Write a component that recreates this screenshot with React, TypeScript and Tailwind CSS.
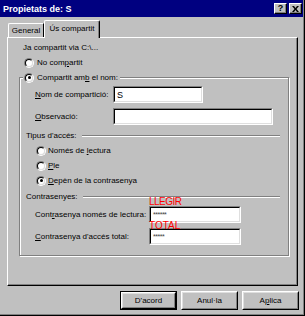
import React from 'react';

const Radio: React.FC<{ checked?: boolean }> = ({ checked }) => (
  <span className="w-[10px] h-[10px] shrink-0 rounded-full border border-t-[#808080] border-l-[#808080] border-b-white border-r-white flex">
    <span className="flex-1 rounded-full border border-t-black border-l-black border-b-[#dfdfdf] border-r-[#dfdfdf] bg-white flex items-center justify-center">
      {checked && <span className="w-[3px] h-[3px] rounded-full bg-black" />}
    </span>
  </span>
);

const Field: React.FC<{ className: string; children?: React.ReactNode }> = ({ className, children }) => (
  <div className={`h-[17px] shrink-0 border border-t-[#808080] border-l-[#808080] border-b-white border-r-white flex ${className}`}>
    <div className="flex-1 border border-t-black border-l-black border-b-[#dfdfdf] border-r-[#dfdfdf] bg-white flex items-center px-[2px]">
      {children}
    </div>
  </div>
);

const Btn: React.FC<{ children: React.ReactNode; primary?: boolean }> = ({ children, primary }) => (
  <div className={`w-[57px] h-[19px] flex ${primary ? 'border border-black' : ''}`}>
    <div className="flex-1 border border-t-white border-l-white border-b-black border-r-black flex">
      <div className="flex-1 border border-t-[#dfdfdf] border-l-[#dfdfdf] border-b-[#808080] border-r-[#808080] flex items-center justify-center text-[8px]">
        {children}
      </div>
    </div>
  </div>
);

const Etched = () => <div className="flex-1 h-[2px] border-t border-t-[#808080] border-b border-b-white" />;

const CapBtn: React.FC<{ children: React.ReactNode }> = ({ children }) => (
  <div className="w-[13px] h-[11px] bg-[#c0c0c0] border border-t-white border-l-white border-b-black border-r-black flex items-center justify-center shadow-[inset_-1px_-1px_0_#808080]">
    {children}
  </div>
);

export default function App() {
  return (
    <div className="w-[305px] h-[316px] bg-[#c0c0c0] flex flex-col text-black text-[8px] leading-[10px] font-['Liberation_Sans',Arial,sans-serif] shadow-[inset_-1px_-1px_0_#000,inset_-2px_-2px_0_#808080]">
      {/* Title bar */}
      <div className="h-[17px] w-[303px] bg-[#000080] flex items-center justify-between pl-[3px] pr-[1px]">
        <span className="text-white font-bold text-[9px]">Propietats de: S</span>
        <div className="flex gap-[2px]">
          <CapBtn><span className="font-bold text-[9px] leading-[9px]">?</span></CapBtn>
          <CapBtn>
            <svg width="7" height="6" viewBox="0 0 7 6">
              <path d="M0 0h2l1.5 2 1.5-2h2L4.5 3 7 6H5L3.5 4 2 6H0l2.5-3z" fill="#000" />
            </svg>
          </CapBtn>
        </div>
      </div>

      {/* Tabs */}
      <div className="h-[20px] flex items-end pl-[8px]">
        <div className="w-[36px] h-[14px] border-t border-l border-t-white border-l-white border-r border-r-black rounded-tl-[2px] flex items-center justify-center text-[8px]">
          General
        </div>
        <div className="relative z-10 -mb-px w-[56px] h-[18px] bg-[#c0c0c0] border-t border-l border-t-white border-l-white border-r border-r-black rounded-t-[2px] shadow-[inset_-1px_0_0_#808080] flex items-center justify-center pb-[2px]">
          Ús compartit
        </div>
      </div>

      {/* Panel */}
      <div className="ml-[7px] w-[291px] h-[249px] shrink-0 border border-t-white border-l-white border-b-black border-r-black shadow-[inset_-1px_-1px_0_#808080] flex flex-col">
        <div className="pt-[3px] pl-[15px] h-[16px] leading-[13px]">Ja compartit via C:\...</div>
        <div className="mt-[2px] pl-[16px] h-[13px] flex items-center gap-[3px]">
          <Radio />
          <span>No com<u>p</u>artit</span>
        </div>

        {/* Group box */}
        <div className="relative mt-[8px] ml-[11px] w-[270px] h-[179px] border border-[#808080] shadow-[inset_1px_1px_0_#fff,1px_1px_0_#fff] flex flex-col">
          <div className="absolute top-[-6px] left-[3px] h-[11px] bg-[#c0c0c0] flex items-center gap-[3px] pl-[1px] pr-[2px]">
            <Radio checked />
            <span>Compartit am<u>b</u> el nom:</span>
          </div>

          <div className="mt-[8px] pl-[15px] flex items-center">
            <span className="w-[78px]"><u>N</u>om de compartició:</span>
            <Field className="w-[90px]"><span className="text-[9px]">S</span></Field>
          </div>
          <div className="mt-[5px] pl-[15px] flex items-center">
            <span className="w-[78px]"><u>O</u>bservació:</span>
            <Field className="w-[160px]" />
          </div>

          <div className="mt-[4px] h-[13px] pl-[6px] pr-[8px] flex items-center gap-[5px]">
            <span>Tipus d'accés:</span>
            <Etched />
          </div>
          <div className="mt-[1px] flex flex-col">
            <div className="h-[15px] pl-[16px] flex items-center gap-[2px]">
              <Radio />
              <span>Només de <u>l</u>ectura</span>
            </div>
            <div className="h-[15px] pl-[16px] flex items-center gap-[2px]">
              <Radio />
              <span><u>P</u>le</span>
            </div>
            <div className="h-[15px] pl-[16px] flex items-center gap-[2px]">
              <Radio checked />
              <span><u>D</u>epèn de la contrasenya</span>
            </div>
          </div>

          <div className="mt-[2px] h-[13px] pl-[6px] pr-[8px] flex items-center gap-[5px]">
            <span>Contrasenyes:</span>
            <Etched />
          </div>
          <div className="mt-[3px] pl-[15px] flex items-center">
            <span className="w-[114px]">Cont<u>r</u>asenya només de lectura:</span>
            <div className="relative">
              <Field className="w-[92px]"><span className="text-[7px] text-[#404040] tracking-[-0.5px]">******</span></Field>
              <span className="absolute left-0 top-[-9px] text-[10px] leading-[10px] text-[#ff0000] tracking-[-0.5px] whitespace-nowrap">LLEGIR</span>
            </div>
          </div>
          <div className="mt-[5px] pl-[15px] flex items-center">
            <span className="w-[114px]"><u>C</u>ontrasenya d'accés total:</span>
            <div className="relative">
              <Field className="w-[92px]"><span className="text-[7px] text-[#404040] tracking-[-0.5px]">*****</span></Field>
              <span className="absolute left-0 top-[-7px] text-[10px] leading-[10px] text-[#ff0000] whitespace-nowrap">TOTAL</span>
            </div>
          </div>
        </div>
      </div>

      {/* Buttons */}
      <div className="mt-[5px] w-[299px] flex justify-end gap-[4px]">
        <Btn primary>D'acord</Btn>
        <Btn>Anul·la</Btn>
        <Btn>A<u>p</u>lica</Btn>
      </div>
    </div>
  );
}
